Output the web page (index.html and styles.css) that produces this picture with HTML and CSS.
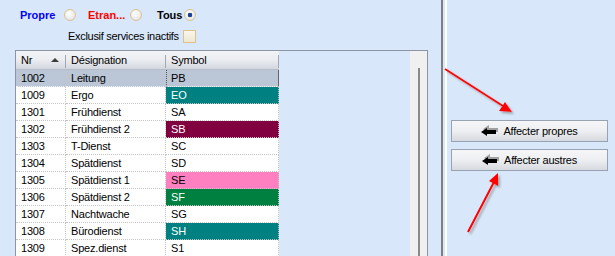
FILE: index.html
```html
<!DOCTYPE html>
<html lang="fr">
<head>
    <meta charset="UTF-8">
    <title>Services</title>
    <link rel="stylesheet" href="styles.css">
</head>
<body>
    <div class="window">
        <div class="left-pane">
            <div class="radio-row">
                <div class="opt opt-propre">
                    <span class="opt-text">Propre</span>
                    <span class="radio"></span>
                </div>
                <div class="opt opt-etran">
                    <span class="opt-text">Etran...</span>
                    <span class="radio"></span>
                </div>
                <div class="opt opt-tous">
                    <span class="opt-text">Tous</span>
                    <span class="radio is-checked"></span>
                </div>
            </div>
            <div class="check-row">
                <span class="check-text">Exclusif services inactifs</span>
                <span class="checkbox"></span>
            </div>

            <div class="grid">
                <div class="grid-body">
                    <div class="grid-head">
                        <div class="hcell"><span>Nr</span><span class="sort-up"></span></div>
                        <div class="hcell">Désignation</div>
                        <div class="hcell">Symbol</div>
                    </div>
                    <div class="grid-row is-selected">
                        <div class="cell">1002</div><div class="cell">Leitung</div><div class="cell is-focus">PB</div>
                    </div>
                    <div class="grid-row">
                        <div class="cell">1009</div><div class="cell">Ergo</div><div class="cell sym-teal">EO</div>
                    </div>
                    <div class="grid-row">
                        <div class="cell">1301</div><div class="cell">Frühdienst</div><div class="cell">SA</div>
                    </div>
                    <div class="grid-row">
                        <div class="cell">1302</div><div class="cell">Frühdienst 2</div><div class="cell sym-maroon">SB</div>
                    </div>
                    <div class="grid-row">
                        <div class="cell">1303</div><div class="cell">T-Dienst</div><div class="cell">SC</div>
                    </div>
                    <div class="grid-row">
                        <div class="cell">1304</div><div class="cell">Spätdienst</div><div class="cell">SD</div>
                    </div>
                    <div class="grid-row">
                        <div class="cell">1305</div><div class="cell">Spätdienst 1</div><div class="cell sym-pink">SE</div>
                    </div>
                    <div class="grid-row">
                        <div class="cell">1306</div><div class="cell">Spätdienst 2</div><div class="cell sym-green">SF</div>
                    </div>
                    <div class="grid-row">
                        <div class="cell">1307</div><div class="cell">Nachtwache</div><div class="cell">SG</div>
                    </div>
                    <div class="grid-row">
                        <div class="cell">1308</div><div class="cell">Bürodienst</div><div class="cell sym-teal">SH</div>
                    </div>
                    <div class="grid-row">
                        <div class="cell">1309</div><div class="cell">Spez.dienst</div><div class="cell">S1</div>
                    </div>
                </div>
                <div class="vscroll"><span class="vscroll-thumb"></span></div>
            </div>
        </div>

        <div class="splitter"></div>

        <div class="right-pane">
            <button class="btn">
                <svg class="btn-icon" width="17" height="12" viewBox="0 0 17 12">
                    <polygon points="2,4 8,0 8,3 17,3 17,7 8,7 8,9" fill="#a0a0a0"/>
                    <polygon points="0,7 6,3 6,5 15,5 15,9 6,9 6,11" fill="#000"/>
                </svg>
                <span>Affecter propres</span>
            </button>
            <button class="btn">
                <svg class="btn-icon" width="17" height="12" viewBox="0 0 17 12">
                    <polygon points="2,4 8,0 8,3 17,3 17,7 8,7 8,9" fill="#a0a0a0"/>
                    <polygon points="0,7 6,3 6,5 15,5 15,9 6,9 6,11" fill="#000"/>
                </svg>
                <span>Affecter austres</span>
            </button>
        </div>

        <!-- red annotation arrows drawn over the screenshot -->
        <svg class="callouts" width="615" height="256" viewBox="0 0 615 256">
            <defs>
                <filter id="shadow" x="-20%" y="-20%" width="140%" height="140%">
                    <feDropShadow dx="2" dy="2" stdDeviation="1.2" flood-color="#777" flood-opacity="0.6"/>
                </filter>
            </defs>
            <g filter="url(#shadow)" fill="#ff0000" stroke="#ff0000">
                <line x1="445" y1="69" x2="503" y2="106" stroke-width="2"/>
                <polygon points="512,112 499,111 505,102" stroke="none"/>
                <line x1="468" y1="232" x2="494" y2="182" stroke-width="2"/>
                <polygon points="498,173 498,186 489,181" stroke="none"/>
            </g>
        </svg>
    </div>
</body>
</html>
```

FILE: styles.css
```css
body {
    margin: 0;
    font-family: "Liberation Sans", Arial, sans-serif;
    font-size: 11px;
    color: #000;
    background: #d8e8fa;
    overflow: hidden;
}
.window {
    position: relative;
    display: flex;
    width: 615px;
    height: 256px;
    overflow: hidden;
    background: #d8e8fa;
}
.left-pane {
    width: 441px;
    padding-top: 8px;
    box-sizing: border-box;
}

/* filter options */
.radio-row {
    display: flex;
    align-items: center;
    height: 14px;
    padding-left: 20px;
}
.opt {
    display: flex;
    align-items: center;
    font-weight: bold;
}
.opt-propre { margin-right: 12px; color: #0000ff; }
.opt-propre .opt-text { width: 44px; }
.opt-etran { margin-right: 15px; color: #ff0000; }
.opt-etran .opt-text { width: 42px; }
.opt-tous .opt-text { width: 27px; }
.radio {
    width: 12px;
    height: 12px;
    box-sizing: border-box;
    border: 1px solid #dcc28e;
    border-radius: 50%;
    background: radial-gradient(circle at 40% 35%, #ffffff, #e4e4e4 80%);
}
.radio.is-checked {
    background: radial-gradient(circle, #1c428f 0 2px, transparent 2.6px),
                radial-gradient(circle at 40% 35%, #ffffff, #e4e4e4 80%);
}
.check-row {
    display: flex;
    align-items: center;
    height: 14px;
    margin-top: 7px;
    padding-left: 68px;
}
.check-text {
    width: 114px;
    letter-spacing: -0.3px;
    white-space: nowrap;
}
.checkbox {
    width: 13px;
    height: 13px;
    margin-left: 1px;
    box-sizing: border-box;
    border: 1px solid #dcc28e;
    background: linear-gradient(#faf6ec, #efe6d2);
}

/* grid */
.grid {
    display: flex;
    width: 413px;
    height: 220px;
    margin: 7px 0 0 15px;
    box-sizing: border-box;
    border: 1px solid #8b95a4;
    border-bottom: none;
}
.grid-body {
    flex: 1;
}
.grid-head, .grid-row {
    display: grid;
    grid-template-columns: 50px 100px 113px;
}
.hcell {
    display: flex;
    align-items: center;
    justify-content: space-between;
    height: 19px;
    box-sizing: border-box;
    padding: 0 7px 0 5px;
    border-bottom: 1px solid #b4bcc7;
    letter-spacing: -0.2px;
    background:
        linear-gradient(#a0a8b4, #a0a8b4) right 4px / 1px 13px no-repeat,
        linear-gradient(#f2f3f6, #eceef2 45%, #d3d7de);
}
.sort-up {
    width: 0;
    height: 0;
    border-left: 4px solid transparent;
    border-right: 4px solid transparent;
    border-bottom: 4px solid #3c3c3c;
}
.cell {
    height: 17px;
    line-height: 16px;
    box-sizing: border-box;
    padding-left: 5px;
    border-right: 1px dotted #c4c4c4;
    border-bottom: 1px dotted #c4c4c4;
    background: #fff;
    letter-spacing: -0.2px;
    white-space: nowrap;
    overflow: hidden;
}
.grid-row.is-selected .cell {
    background: #bbc6d6;
    border-bottom-color: #f4f4f4;
}
.grid-row.is-selected .cell.is-focus {
    border-left: 1px dotted #555;
    border-right: 1px solid #666;
    padding-left: 4px;
}
.sym-teal { background: #008080 !important; color: #fff; }
.sym-maroon { background: #800040 !important; color: #fff; }
.sym-pink { background: #ff80c0 !important; }
.sym-green { background: #008040 !important; color: #fff; }

.vscroll {
    width: 17px;
    padding-top: 17px;
    box-sizing: border-box;
    background: #f0f0f0;
}
.vscroll-thumb {
    display: block;
    width: 2px;
    height: 100%;
    margin-left: 8px;
    background: #8a8a8a;
}

.splitter {
    width: 2px;
    border-left: 2px solid #808080;
    border-right: 2px solid #ffffff;
}

/* action buttons */
.right-pane {
    display: flex;
    flex-direction: column;
    gap: 7px;
    flex: 1;
    padding: 120px 0 0 4px;
}
.btn {
    display: flex;
    align-items: center;
    justify-content: center;
    gap: 5px;
    width: 157px;
    height: 22px;
    padding: 0;
    box-sizing: border-box;
    border: 1px solid #97a2b2;
    background: linear-gradient(#f6f6f8, #eeeff2 50%, #d6d9df);
    font: inherit;
    letter-spacing: -0.25px;
    color: #000;
}
.btn-icon {
    display: block;
}

.callouts {
    position: absolute;
    left: 0;
    top: 0;
    pointer-events: none;
}
```
